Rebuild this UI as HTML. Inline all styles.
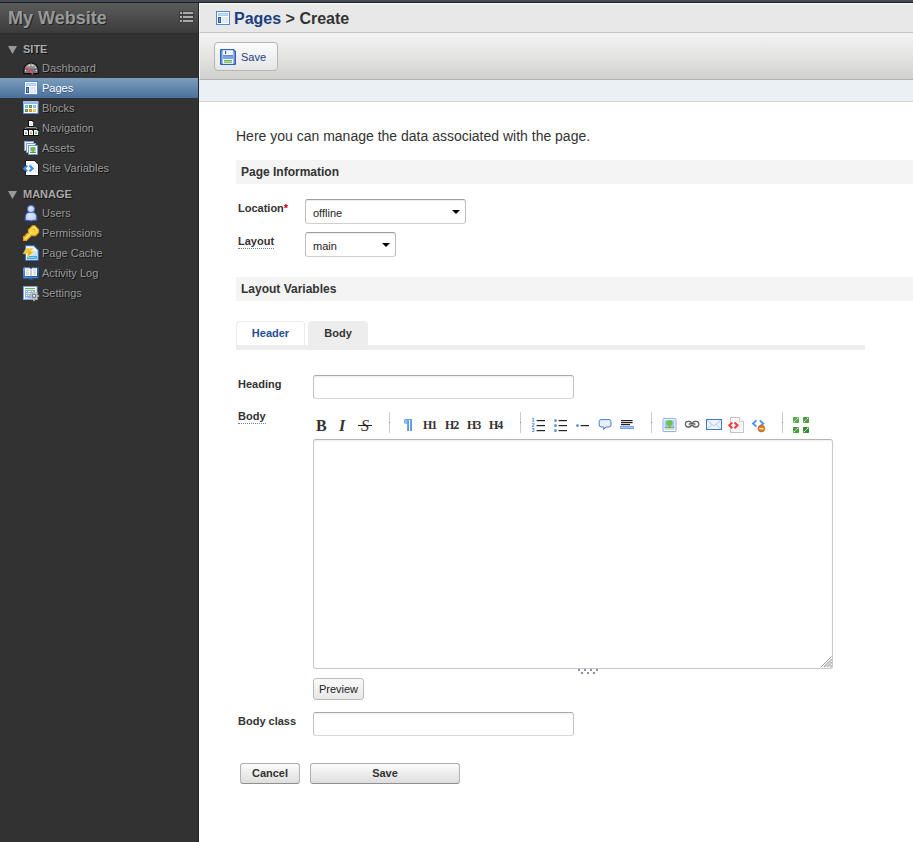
<!DOCTYPE html>
<html><head><meta charset="utf-8"><title>Pages &gt; Create</title>
<style>
*{box-sizing:border-box}
html,body{margin:0;padding:0}
body{width:913px;height:842px;overflow:hidden;background:#fff;font-family:"Liberation Sans",Arial,sans-serif;font-size:12px;color:#333;position:relative}
#topbar{position:absolute;left:0;top:0;width:913px;height:3px;background:#464a54;border-bottom:1px solid #1c1c1c;z-index:5}
#side{position:absolute;left:0;top:3px;width:199px;height:839px;background:#323232;border-right:1px solid #272727}
#side .hd{height:30px;background:linear-gradient(#5b5b5b,#3c3c3c);position:relative}
#side .hdsh{height:2px;background:linear-gradient(#2b2b2b,#323232)}
#side .hd .t{position:absolute;left:8px;top:4px;font-size:18px;font-weight:bold;color:#999;text-shadow:1px 1px 0 #222;line-height:22px;white-space:nowrap}
#side .hd svg{position:absolute;left:178px;top:7px}
#side h3{margin:0;font-size:11px;font-weight:bold;color:#aaa;text-shadow:1px 1px 0 #111;position:absolute;left:23px;line-height:14px}
#side .tri{position:absolute;left:8px;width:0;height:0;border-left:4.5px solid transparent;border-right:4.5px solid transparent;border-top:8px solid #999}
#side .it{position:absolute;left:0;width:198px;height:20px;color:#999;font-size:11px;line-height:20px;text-shadow:1px 1px 0 #111;white-space:nowrap}
#side .it span{position:absolute;left:42px;top:0}
#side .it.cur{background:linear-gradient(#7d9fbe,#49709a);color:#fff;text-shadow:0 1px 0 #3a5878}
#side .it svg{position:absolute;left:23px;top:2px}
#main{position:absolute;left:199px;top:3px;width:714px;height:839px;background:#fff}
#title{height:30px;background:#e8e8e8;border-top:1px solid #fff;border-left:1px solid #f6f6f6;border-bottom:1px solid #c6c6c6;position:relative}
#title .t{position:absolute;left:34px;top:4px;font-size:16px;font-weight:bold;color:#333;line-height:22px;white-space:nowrap}
#title .t b{color:#1b3f7f}
#title svg{position:absolute;left:15px;top:6px}
#tb{height:47px;background:linear-gradient(#f4f4f4,#e6e6e5 45%,#d0d0ce);border-bottom:1px solid #b2b2b2;border-left:1px solid #f6f6f6;position:relative}
#tb .btn{position:absolute;left:14px;top:9px;width:64px;height:29px;border:1px solid #b5b5b5;border-radius:4px;background:linear-gradient(#fbfbfb,#e6e6e6);font-size:11px;color:#1b3f7f;line-height:27px}
#tb .btn span{position:absolute;left:26px;top:1px}
#tb .btn svg{position:absolute;left:5px;top:6px}
#strip{height:22px;background:#ebf0f4;border-bottom:1px solid #d0d4d8}
.abs{position:absolute}
svg{overflow:visible}
.lbl{position:absolute;font-weight:bold;font-size:11px;color:#333;white-space:nowrap;line-height:14px}
.lbl u{text-decoration:none;border-bottom:1px dotted #6a84b0;padding-bottom:1px}
.sec{position:absolute;left:37px;width:677px;height:24px;background:#f4f4f4;font-weight:bold;font-size:12px;line-height:24px;padding-left:5px;color:#333}
.inp{position:absolute;border:1px solid #c4c4c4;border-top-color:#a8a8a8;border-bottom-color:#d8d8d8;border-radius:3px;background:#fff;box-shadow:inset 0 1px 2px #eee}
.dd{position:absolute;border:1px solid #bdbdbd;border-top-color:#9e9e9e;border-bottom-color:#d0d0d0;border-radius:3px;background:#fff;font-size:11px;color:#222;box-shadow:inset 0 1px 1px #eee}
.dd i{position:absolute;top:10px;width:0;height:0;border-left:4px solid transparent;border-right:4px solid transparent;border-top:4px solid #000}
.fbtn{position:absolute;border:1px solid #b0b0b0;border-bottom-color:#8f8f8f;border-radius:3px;background:linear-gradient(#fbfbfb,#dedede);font-size:11px;font-weight:bold;color:#333;text-align:center}
.tab{position:absolute;top:318px;height:24px;font-size:11px;font-weight:bold;line-height:25px;text-align:center;border-radius:4px 4px 0 0}
.mk{position:absolute;top:413px;width:16px;height:16px}
.mks{position:absolute;top:409px;width:1px;height:21px;background:#ccc}
.mks:after{content:"";position:absolute;left:0;top:10px;width:1px;height:1px;background:#c87838}
.mkt{position:absolute;font-family:"Liberation Serif",serif;color:#333;white-space:nowrap}
</style></head><body>
<div id="topbar"></div>
<div id="side">
 <div class="hd"><div class="t">My Website</div>
  <svg width="18" height="18" viewBox="0 0 18 18"><g fill="#333" opacity=".55"><rect x="1" y="1" width="15" height="4"/><rect x="1" y="5" width="15" height="4"/><rect x="1" y="9" width="15" height="4"/></g><g fill="#aaa"><rect x="2" y="2" width="2" height="2"/><rect x="5" y="2" width="10" height="2"/><rect x="2" y="6" width="2" height="2"/><rect x="5" y="6" width="10" height="2"/><rect x="2" y="10" width="2" height="2"/><rect x="5" y="10" width="10" height="2"/></g></svg>
 </div><div class="hdsh"></div>
 <svg class="abs" style="left:8px;top:43px" width="9" height="8"><path d="M0 0H9L4.5 8Z" fill="#999"/></svg><h3 style="top:39px">SITE</h3>
 <div class="it" style="top:55px"><svg width="16" height="16" viewBox="0 0 16 16" ><defs><linearGradient id="gd" x1="0" y1="0" x2="0" y2="1"><stop offset="0" stop-color="#b4b4b4"/><stop offset=".5" stop-color="#8a8a8c"/><stop offset=".55" stop-color="#6c6c7c"/><stop offset="1" stop-color="#77788c"/></linearGradient></defs>
<path d="M.8 13.6 V10.2 A7.2 7.2 0 0 1 15.2 10.2 V13.6 Z" fill="url(#gd)" stroke="#0a0a0a" stroke-width="1.1"/>
<g fill="#e8e8e8"><rect x="2" y="10" width="1.2" height="1.2"/><rect x="12.8" y="10" width="1.2" height="1.2"/><rect x="5.8" y="5" width="1.1" height="1.1"/><rect x="9.1" y="5" width="1.1" height="1.1"/><rect x="11.8" y="6.8" width="1.1" height="1.1"/><rect x="3.6" y="6.6" width="1" height="1"/></g>
<path d="M3.2 7.2 L9.6 13.8" stroke="#f04848" stroke-width="1.3" stroke-linecap="round"/></svg><span>Dashboard</span></div>
 <div class="it cur" style="top:75px"><svg width="16" height="16" viewBox="0 0 16 16" ><rect x="1.5" y="1.5" width="13" height="13" fill="#fff" stroke="#5b86c9"/><rect x="3" y="3" width="10" height="3" fill="#a9cbf0"/><rect x="4" y="4" width="8" height="1" fill="#c6def6"/><rect x="3" y="7" width="3" height="6" fill="#1f57a7"/><rect x="4" y="8" width="1" height="4" fill="#7fa4d8"/><rect x="7" y="7" width="6" height="6" fill="#e0e5f1"/><rect x="8.5" y="8.5" width="3" height="3" fill="#e9edf6"/></svg><span>Pages</span></div>
 <div class="it" style="top:95px"><svg width="16" height="16" viewBox="0 0 16 16" ><defs><linearGradient id="gb" x1="0" y1="0" x2="0" y2="1"><stop offset="0" stop-color="#8fb6ea"/><stop offset="1" stop-color="#5f8fd4"/></linearGradient></defs>
<path d="M0 2.5 Q0 1 1.5 1 H14 Q15.5 1 15.5 2.5 V14 H0 Z" fill="url(#gb)"/><rect x="0" y="1" width="15.5" height="2.6" rx="1" fill="#9cc0ee"/><rect x="1" y="4" width="13.5" height="9" fill="#fff"/>
<rect x="2" y="5" width="3" height="3" fill="#6db3f5"/><rect x="6" y="5" width="3" height="3" fill="#4a9e44"/><rect x="10" y="5" width="3" height="3" fill="#78bbf6"/>
<rect x="2" y="9" width="3" height="3" fill="#4a9e44"/><rect x="6" y="9" width="3" height="3" fill="#f5822a"/><rect x="10" y="9" width="3" height="3" fill="#e8c848"/>
<g fill="#fff" opacity=".45"><rect x="3" y="6" width="1" height="1"/><rect x="7" y="6" width="1" height="1"/><rect x="11" y="6" width="1" height="1"/><rect x="3" y="10" width="1" height="1"/><rect x="7" y="10" width="1" height="1"/><rect x="11" y="10" width="1" height="1"/></g></svg><span>Blocks</span></div>
 <div class="it" style="top:115px"><svg width="16" height="16" viewBox="0 0 16 16" ><path d="M2.6 9.4 V8.4 Q2.6 7.6 3.4 7.6 H12.6 Q13.4 7.6 13.4 8.4 V9.4 M8 6.4 V7.6" fill="none" stroke="#a4a4a4" stroke-width="1"/><path d="M5 0 h4.4 l1.6 1.6 v5.4 h-6 z" fill="#0c0c0c"/><path d="M6 1 h3 l1.2 1.2 v3.8 h-4.2 z" fill="#fff"/><rect x="6.9" y="2.2" width="2.2" height="1.4" rx=".6" fill="#dcdcdc" opacity=".55"/><rect x="6.9" y="3.4" width="2.2" height="1.5" rx=".7" fill="#dcdcdc"/><path d="M0 9 h4.4 l1.6 1.6 v5.4 h-6 z" fill="#0c0c0c"/><path d="M1 10 h3 l1.2 1.2 v3.8 h-4.2 z" fill="#fff"/><rect x="1.9" y="11.2" width="2.2" height="1.4" rx=".6" fill="#5599e0" opacity=".55"/><rect x="1.9" y="12.4" width="2.2" height="1.5" rx=".7" fill="#5599e0"/><path d="M5 9 h4.4 l1.6 1.6 v5.4 h-6 z" fill="#0c0c0c"/><path d="M6 10 h3 l1.2 1.2 v3.8 h-4.2 z" fill="#fff"/><rect x="6.9" y="11.2" width="2.2" height="1.4" rx=".6" fill="#f08040" opacity=".55"/><rect x="6.9" y="12.4" width="2.2" height="1.5" rx=".7" fill="#f08040"/><path d="M10 9 h4.4 l1.6 1.6 v5.4 h-6 z" fill="#0c0c0c"/><path d="M11 10 h3 l1.2 1.2 v3.8 h-4.2 z" fill="#fff"/><rect x="11.9" y="11.2" width="2.2" height="1.4" rx=".6" fill="#40c040" opacity=".55"/><rect x="11.9" y="12.4" width="2.2" height="1.5" rx=".7" fill="#40c040"/></svg><span>Navigation</span></div>
 <div class="it" style="top:135px"><svg width="16" height="16" viewBox="0 0 16 16" ><rect x="1.5" y="1.5" width="9" height="9" fill="#f4f4f4" stroke="#7f9fd8"/><rect x="3.5" y="3.5" width="9" height="9" fill="#fbfbf4" stroke="#7f9fd8"/><rect x="5.5" y="5.5" width="9" height="9" fill="#fff" stroke="#6f93d6"/>
<rect x="7" y="7" width="6" height="6" fill="#b9d4f4"/><rect x="7.6" y="7" width="4.6" height="4" rx="1.4" fill="#6cc040"/><rect x="9.2" y="11" width="1.6" height="1.2" fill="#d88830"/><rect x="7" y="12" width="6" height="1" fill="#48a028"/></svg><span>Assets</span></div>
 <div class="it" style="top:155px"><svg width="16" height="16" viewBox="0 0 16 16" ><path d="M2.2 .2 H11.8 L15.8 4.2 V15.8 H2.2 Z" fill="#141414"/><path d="M3 1 H11.4 L15 4.6 V15 H3 Z" fill="#fff"/><path d="M4.4 2.6 H10.8 V5.4 H13.6 V13.6 H4.4 Z" fill="#f3f3f3"/><path d="M4.3 5.5 l-3 2.9 l3 2.9 M6.5 5.5 l3 2.9 l-3 2.9" fill="none" stroke="#3f8fe8" stroke-width="2.1"/></svg><span>Site Variables</span></div>
 <svg class="abs" style="left:8px;top:188px" width="9" height="8"><path d="M0 0H9L4.5 8Z" fill="#999"/></svg><h3 style="top:184px">MANAGE</h3>
 <div class="it" style="top:200px"><svg width="16" height="16" viewBox="0 0 16 16" ><defs><radialGradient id="gu" cx=".45" cy=".4" r=".7"><stop offset="0" stop-color="#dfe7f8"/><stop offset=".65" stop-color="#c4d3f2"/><stop offset="1" stop-color="#7d9fe6"/></radialGradient></defs>
<path d="M2.2 15.2 Q1.6 8 6 7.2 H10 Q14.4 8 13.8 15.2 Q8 16.6 2.2 15.2 Z" fill="url(#gu)" stroke="#2f62cf" stroke-width="1"/><circle cx="8" cy="4" r="3.6" fill="url(#gu)" stroke="#3f74dc" stroke-width="1"/></svg><span>Users</span></div>
 <div class="it" style="top:220px"><svg width="16" height="16" viewBox="0 0 16 16" ><path d="M9.5 .8 L12 .8 L15.6 4.6 L15.6 7.4 L12.4 10.8 L9.6 10.8 L8.8 10 L3.4 15.4 L.6 15.4 L.6 11.6 L2.2 11.6 L2.2 10 L3.8 10 L3.8 8.6 L6 8.4 L5.4 7.2 L5.4 4.8 Z" fill="#f8d63c" stroke="#ee9c1c" stroke-width="1.1" stroke-linejoin="round"/><path d="M10 2 L11.6 2 L14.4 5 L13.6 6 L10.4 2.8 Z" fill="#fff6c0"/><path d="M10.6 3.4 l2 2" stroke="#e09818" stroke-width="1.2"/><path d="M1.8 14.2 L9 7" stroke="#fff2a0" stroke-width=".9"/></svg><span>Permissions</span></div>
 <div class="it" style="top:240px"><svg width="16" height="16" viewBox="0 0 16 16" ><defs><linearGradient id="gp" x1="0" y1="0" x2="1" y2="1"><stop offset="0" stop-color="#fff"/><stop offset="1" stop-color="#b7d6f6"/></linearGradient></defs>
<path d="M2.5 .8 H11 L15.2 5 V15.2 H2.5 Z" fill="#fff" stroke="#2f6fd0" stroke-width="1.1"/><path d="M4 2.4 H10.4 V5.6 H13.8 V13.8 H4 Z" fill="url(#gp)"/><rect x="4" y="11" width="10" height="3" fill="#38a8f4"/><rect x="5" y="12" width="8" height="1" fill="#8fd2fb"/>
<path d="M3.2 3.2 H10.2 L8 6.6 L11.2 6.4 L3.4 13.2 L5 8.6 L.2 8.8 Z" fill="#f2c838" stroke="#f6dc70" stroke-width=".5"/><path d="M6 6 L9 8 L5 11 Z" fill="#e0a020" opacity=".7"/></svg><span>Page Cache</span></div>
 <div class="it" style="top:260px"><svg width="16" height="16" viewBox="0 0 16 16" ><defs><linearGradient id="gk" x1="0" y1="0" x2="1" y2="1"><stop offset="0" stop-color="#6aa6e0"/><stop offset=".5" stop-color="#2c68b0"/><stop offset="1" stop-color="#0f3f80"/></linearGradient></defs>
<path d="M0 3.4 L1 2.2 H6.6 L8 3.2 L9.4 2.2 H15 L16 3.4 V13.8 H10 L9.4 15 H6.6 L6 13.8 H0 Z" fill="url(#gk)"/><path d="M2 3.2 H6.4 L8 4.2 L9.6 3.2 H14 V11 H2 Z" fill="#fff"/><rect x="7.4" y="4.4" width="1.2" height="6.4" fill="#aaa"/>
<g fill="#c4c4c4"><rect x="3" y="4.6" width="3" height="1"/><rect x="3" y="6.6" width="3" height="1"/><rect x="3" y="8.6" width="3" height="1"/><rect x="10" y="4.6" width="3" height="1"/><rect x="10" y="6.6" width="3" height="1"/><rect x="10" y="8.6" width="3" height="1"/></g><rect x="1" y="12.2" width="14" height=".8" fill="#7fb0e6" opacity=".7"/></svg><span>Activity Log</span></div>
 <div class="it" style="top:280px"><svg width="16" height="16" viewBox="0 0 16 16" ><rect x=".5" y="1.5" width="13.5" height="13" fill="#fff" stroke="#7ba6e2"/><rect x="2" y="3" width="10" height="1.2" fill="#6ab85a"/><rect x="2" y="5" width="10" height="8.4" fill="#8fb2e4"/>
<g fill="#fff"><rect x="3" y="6" width="1.2" height="1"/><rect x="5" y="6" width="3" height="1"/><rect x="9" y="6" width="2" height="1"/><rect x="3" y="8" width="1.2" height="1"/><rect x="5" y="8" width="3" height="1"/><rect x="3" y="10" width="1.2" height="1"/><rect x="5" y="10" width="2" height="1"/><rect x="3" y="12" width="1.2" height="1"/></g>
<path d="M15.96 10.37 L15.96 11.63 L14.28 11.90 L13.95 12.68 L14.95 14.06 L14.06 14.95 L12.68 13.95 L11.90 14.28 L11.63 15.96 L10.37 15.96 L10.10 14.28 L9.32 13.95 L7.94 14.95 L7.05 14.06 L8.05 12.68 L7.72 11.90 L6.04 11.63 L6.04 10.37 L7.72 10.10 L8.05 9.32 L7.05 7.94 L7.94 7.05 L9.32 8.05 L10.10 7.72 L10.37 6.04 L11.63 6.04 L11.90 7.72 L12.68 8.05 L14.06 7.05 L14.95 7.94 L13.95 9.32 L14.28 10.10 Z" fill="#d2d2d2" stroke="#8a8a8a" stroke-width=".5"/><circle cx="11" cy="11" r="1.9" fill="#9fc4f0" stroke="#555" stroke-width=".8"/><rect x="10.2" y="10.2" width="1.6" height="1" fill="#fff"/></svg><span>Settings</span></div>
</div>
<div id="main">
 <div id="title"><svg width="16" height="16" viewBox="0 0 16 16" ><rect x="1.5" y="1.5" width="13" height="13" fill="#fff" stroke="#5b86c9"/><rect x="3" y="3" width="10" height="3" fill="#a9cbf0"/><rect x="4" y="4" width="8" height="1" fill="#c6def6"/><rect x="3" y="7" width="3" height="6" fill="#1f57a7"/><rect x="4" y="8" width="1" height="4" fill="#7fa4d8"/><rect x="7" y="7" width="6" height="6" fill="#e0e5f1"/><rect x="8.5" y="8.5" width="3" height="3" fill="#e9edf6"/></svg><div class="t"><b>Pages</b> &gt; Create</div></div>
 <div id="tb"><div class="btn"><svg width="16" height="16" viewBox="0 0 16 16" ><path d="M.6 1.2 Q.6 .6 1.2 .6 H13.4 L15.4 2.6 V14.8 Q15.4 15.4 14.8 15.4 H1.2 Q.6 15.4 .6 14.8 Z" fill="#79a2e2" stroke="#2b60b6" stroke-width="1.2"/><rect x="3" y="1.2" width="10" height="5" fill="#f2f5fb"/><rect x="2" y="1.4" width="1" height="13" fill="#a8c4ee" opacity=".8"/><rect x="13" y="2.4" width="1" height="12" fill="#a8c4ee" opacity=".6"/><rect x="5" y="2" width="1.2" height="3" fill="#2b60b6"/><rect x="3" y="6" width="10" height="1" fill="#5f8cd4"/><rect x="3" y="10" width="10" height="4.8" fill="#fff"/><rect x="4" y="11" width="8" height="1" fill="#6cb44c"/><rect x="4" y="12" width="8" height=".8" fill="#b8dca8"/><rect x="4" y="12.8" width="8" height="1" fill="#6cb44c"/></svg><span>Save</span></div></div>
 <div id="strip"></div>
 <div class="abs" style="left:37px;top:124px;font-size:14px;color:#333;line-height:18px;white-space:nowrap">Here you can manage the data associated with the page.</div>
 <div class="sec" style="top:157px">Page Information</div>
 <div class="lbl" style="left:39px;top:198px">Location<span style="color:#c00">*</span></div>
 <div class="dd" style="left:106px;top:196px;width:161px;height:25px"><span class="abs" style="left:7px;top:7px">offline</span><i style="left:146px"></i></div>
 <div class="lbl" style="left:39px;top:231px"><u>Layout</u></div>
 <div class="dd" style="left:106px;top:229px;width:91px;height:25px"><span class="abs" style="left:7px;top:7px">main</span><i style="left:76px"></i></div>
 <div class="sec" style="top:274px">Layout Variables</div>
 <div class="abs" style="left:37px;top:342px;width:629px;height:5px;background:#ededed"></div>
 <div class="tab" style="left:37px;width:69px;background:#fff;box-shadow:inset 1px 1px 0 #ececec,inset -1px 0 0 #ececec;color:#1f4f9a">Header</div>
 <div class="tab" style="left:109px;width:60px;background:#ededed;color:#333">Body</div>
 <div class="lbl" style="left:39px;top:374px">Heading</div>
 <div class="inp" style="left:114px;top:372px;width:261px;height:24px"></div>
 <div class="lbl" style="left:39px;top:406px"><u>Body</u></div>
 <div class="mkt" style="left:117px;top:413px;font-size:16px;font-weight:bold;line-height:20px">B</div>
<div class="mkt" style="left:140px;top:413px;font-size:16px;font-style:italic;font-weight:bold;line-height:20px">I</div>
<div class="mkt" style="left:162px;top:413px;font-size:16px;line-height:20px;font-style:italic">S</div><div class="abs" style="left:159px;top:422px;width:14px;height:1px;background:#222"></div>
<div class="mks" style="left:190px"></div>
<div class="mk" style="left:201px"><svg width="16" height="16" viewBox="0 0 16 16" ><defs><linearGradient id="gpi" x1="0" y1="0" x2="1" y2="1"><stop offset="0" stop-color="#6ab4f2"/><stop offset="1" stop-color="#5a8ae6"/></linearGradient></defs><path d="M5.6 3 H12 V15 H10.1 V4.1 H9 V15 H7.1 V7.8 H5.6 Q4 7.8 4 6.2 V4.6 Q4 3 5.6 3 Z" fill="url(#gpi)"/><rect x="5" y="4.2" width="2.2" height="2.6" fill="#9ccaf6" opacity=".7"/></svg></div>
<div class="mkt" style="left:224px;top:415px;font-size:12px;font-weight:bold;line-height:14px;letter-spacing:-1px">H1</div>
<div class="mkt" style="left:246px;top:415px;font-size:12px;font-weight:bold;line-height:14px;letter-spacing:-1px">H2</div>
<div class="mkt" style="left:268px;top:415px;font-size:12px;font-weight:bold;line-height:14px;letter-spacing:-1px">H3</div>
<div class="mkt" style="left:290px;top:415px;font-size:12px;font-weight:bold;line-height:14px;letter-spacing:-1px">H4</div>
<div class="mks" style="left:321px"></div>
<div class="mk" style="left:332px"><svg width="16" height="16" viewBox="0 0 16 16" ><g fill="#222"><rect x="5.6" y="4" width="8.4" height="1.2"/><rect x="5.6" y="9" width="8.4" height="1.2"/><rect x="5.6" y="14" width="8.4" height="1.2"/></g><g font-family="Liberation Sans" font-size="5.5" font-weight="bold" fill="#4a84e0"><text x=".6" y="5.6">1</text><text x=".6" y="10.6">2</text><text x=".6" y="15.6">3</text></g></svg></div>
<div class="mk" style="left:354px"><svg width="16" height="16" viewBox="0 0 16 16" ><g fill="#222"><rect x="5.6" y="4" width="8.4" height="1.2"/><rect x="5.6" y="9" width="8.4" height="1.2"/><rect x="5.6" y="14" width="8.4" height="1.2"/></g><g fill="#5a8fe4"><rect x="1.2" y="3.3" width="2.6" height="2.6" rx=".8"/><rect x="1.2" y="8.3" width="2.6" height="2.6" rx=".8"/><rect x="1.2" y="13.3" width="2.6" height="2.6" rx=".8"/></g></svg></div>
<div class="mk" style="left:376px"><svg width="16" height="16" viewBox="0 0 16 16" ><rect x="5.6" y="9" width="8.4" height="1.2" fill="#222"/><rect x="1.2" y="8.3" width="2.6" height="2.6" rx=".8" fill="#5a8fe4"/></svg></div>
<div class="mk" style="left:399px"><svg width="16" height="16" viewBox="0 0 16 16" ><path d="M3.2 3.6 H11 Q13 3.6 13 5.6 V9 Q13 11 11 11 H8 L5.6 13.6 L6 11 H3.2 Q1.2 11 1.2 9 V5.6 Q1.2 3.6 3.2 3.6 Z" fill="#e6f0fc" stroke="#4a80c4" stroke-width="1"/></svg></div>
<div class="mk" style="left:420px"><svg width="16" height="16" viewBox="0 0 16 16" ><g fill="#222"><rect x="2" y="4" width="11.6" height="1.2"/><rect x="2" y="6" width="11.6" height="1.2"/><rect x="2" y="8" width="9" height="1.2"/></g><rect x="1" y="10" width="14" height="3" fill="#6fa0e8"/><rect x="1.6" y="10.8" width="12.8" height="1.2" fill="#a8c8f4"/></svg></div>
<div class="mks" style="left:452px"></div>
<div class="mk" style="left:463px"><svg width="16" height="16" viewBox="0 0 16 16" ><rect x="1" y="2.6" width="13" height="13" rx="1" fill="#fff" stroke="#8aa8e0"/><rect x="2.6" y="4.2" width="9.8" height="8" fill="#9cc4f4"/><rect x="4.4" y="4.2" width="6" height="5.6" rx="2.4" fill="#6cc444"/><rect x="6.6" y="9.6" width="1.8" height="2" fill="#d88830"/><rect x="2.6" y="11.4" width="9.8" height="1" fill="#58a838"/><rect x="2.6" y="12.4" width="9.8" height="1.6" fill="#cfe6c4"/></svg></div>
<div class="mk" style="left:485px"><svg width="16" height="16" viewBox="0 0 16 16" ><g fill="none" stroke="#606060" stroke-width="1.3"><rect x="1.4" y="5.4" width="6.2" height="5.6" rx="2.7"/><rect x="8.6" y="5.4" width="6.2" height="5.6" rx="2.7"/></g><rect x="4.8" y="7.3" width="6.6" height="1.9" fill="#444"/><rect x="5.4" y="7.9" width="5.4" height=".7" fill="#ddd"/></svg></div>
<div class="mk" style="left:507px"><svg width="16" height="16" viewBox="0 0 16 16" ><rect x=".5" y="3.5" width="15" height="10" fill="#eef5fe" stroke="#4478c8" stroke-width="1"/><path d="M1.2 4.2 L8 10 L14.8 4.2 M1.2 13 L6 8.4 M14.8 13 L10 8.4" fill="none" stroke="#a8c8f2" stroke-width="1"/></svg></div>
<div class="mk" style="left:529px"><svg width="16" height="16" viewBox="0 0 16 16" ><path d="M2.5 1.5 H11.5 L15.5 5.5 V16.5 H2.5 Z" fill="#fff" stroke="#c4c4c4"/><path d="M4 3 H11 V6 H14 V15 H4 Z" fill="#f4f4f4"/><path d="M11.5 1.5 V5.5 H15.5" fill="#fbfbfb" stroke="#c4c4c4" stroke-width=".8"/><path d="M4.3 6.4 l-3 2.9 l3 2.9 M6.5 6.4 l3 2.9 l-3 2.9" fill="none" stroke="#f04040" stroke-width="2.1"/></svg></div>
<div class="mk" style="left:551px"><svg width="16" height="16" viewBox="0 0 16 16" ><path d="M6.4 4.4 L3 7.5 L6.4 10.6 M9.8 4.4 L13.2 7.5 L9.8 10.6" fill="none" stroke="#4a94ea" stroke-width="1.9"/><circle cx="11.4" cy="12.6" r="3.3" fill="#e87818" stroke="#c45a0c" stroke-width=".8"/><rect x="9.4" y="12" width="4" height="1.3" fill="#fff"/></svg></div>
<div class="mks" style="left:583px"></div>
<div class="mk" style="left:594px"><svg width="16" height="16" viewBox="0 0 16 16" ><rect x="0" y="1" width="6" height="6" rx=".8" fill="#58a850"/><path d="M1.5 5.5 l3 -3" stroke="#a8d8a0" stroke-width="1"/><rect x="0.8" y="5" width="1.2" height="1.2" fill="#e8f6e4"/><rect x="4" y="1.8" width="1.2" height="1.2" fill="#e8f6e4"/><rect x="10" y="1" width="6" height="6" rx=".8" fill="#4a9a44"/><path d="M11.5 5.5 l3 -3" stroke="#a8d8a0" stroke-width="1"/><rect x="10.8" y="5" width="1.2" height="1.2" fill="#e8f6e4"/><rect x="14" y="1.8" width="1.2" height="1.2" fill="#e8f6e4"/><rect x="0" y="11" width="6" height="6" rx=".8" fill="#4a9a44"/><path d="M1.5 15.5 l3 -3" stroke="#a8d8a0" stroke-width="1"/><rect x="0.8" y="15" width="1.2" height="1.2" fill="#e8f6e4"/><rect x="4" y="11.8" width="1.2" height="1.2" fill="#e8f6e4"/><rect x="10" y="11" width="6" height="6" rx=".8" fill="#3a8a38"/><path d="M11.5 15.5 l3 -3" stroke="#a8d8a0" stroke-width="1"/><rect x="10.8" y="15" width="1.2" height="1.2" fill="#e8f6e4"/><rect x="14" y="11.8" width="1.2" height="1.2" fill="#e8f6e4"/></svg></div>
 <div class="inp" style="left:114px;top:436px;width:520px;height:230px;border-radius:3px;border-color:#c8c8c8;border-top-color:#b5b5b5"></div>
 <svg class="abs" style="left:379px;top:666px" width="20" height="5" fill="#8593a3"><rect x="0" y="0" width="2" height="2"/><rect x="6" y="0" width="2" height="2"/><rect x="12" y="0" width="2" height="2"/><rect x="18" y="0" width="2" height="2"/><rect x="3" y="3" width="2" height="2"/><rect x="9" y="3" width="2" height="2"/><rect x="15" y="3" width="2" height="2"/></svg><svg class="abs" style="left:621px;top:653px" width="12" height="12"><path d="M11.5 .5 L1 11" stroke="#9a9a9a" stroke-width="1"/><path d="M11.5 3.5 L4 11 M11.5 6.5 L7 11 M11.5 9.5 L10 11" stroke="#666" stroke-width="1.1" stroke-dasharray="1 .5"/></svg>
 <div class="fbtn" style="left:114px;top:675px;width:51px;height:22px;line-height:20px;font-weight:normal;color:#222;border-color:#bbb;background:linear-gradient(#fafafa,#e8e8e8)">Preview</div>
 <div class="lbl" style="left:39px;top:711px">Body class</div>
 <div class="inp" style="left:114px;top:709px;width:261px;height:24px"></div>
 <div class="fbtn" style="left:41px;top:760px;width:60px;height:21px;line-height:19px">Cancel</div>
 <div class="fbtn" style="left:111px;top:760px;width:150px;height:21px;line-height:19px">Save</div>
</div>
</body></html>
